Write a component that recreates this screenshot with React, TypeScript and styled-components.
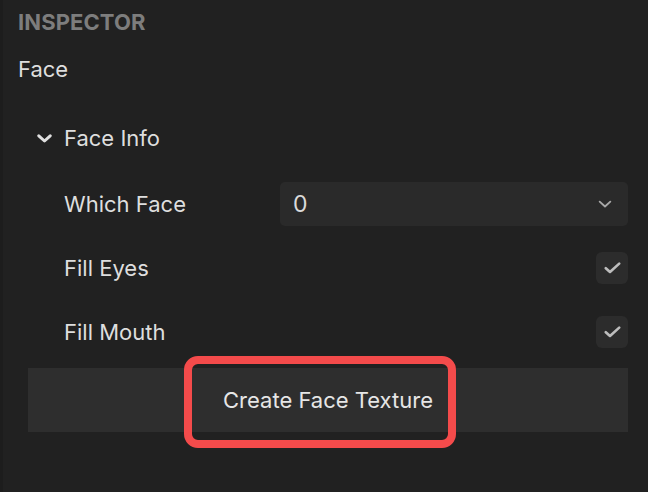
import React from "react";
import styled, { createGlobalStyle } from "styled-components";

const Global = createGlobalStyle`
  html, body { margin: 0; padding: 0; background: #212121; }
  body { font-family: Inter, "Noto Sans", "Liberation Sans", sans-serif; }
  * { box-sizing: border-box; }
`;

const Panel = styled.div`
  width: 648px;
  height: 492px;
  background: #212121;
  border-left: 3px solid #1d1d1d;
  color: #dedede;
  display: flex;
  flex-direction: column;
  padding-right: 20px;
  overflow: hidden;
`;

const Heading = styled.div`
  height: 44px;
  display: flex;
  align-items: center;
  padding-left: 15px;
  font-size: 22px;
  font-weight: 700;
  color: #7d7d7d;
  letter-spacing: 0.1px;
`;

const Title = styled.div`
  height: 50px;
  display: flex;
  align-items: center;
  padding-left: 15px;
  font-size: 22px;
`;

const SectionHeader = styled.div`
  margin-top: 12px;
  height: 64px;
  display: flex;
  align-items: center;
  padding-left: 34px;
  gap: 12px;
  font-size: 22px;
`;

const Row = styled.div<{ $first?: boolean }>`
  margin-top: ${(p) => (p.$first ? "2px" : "0")};
  height: 64px;
  display: flex;
  align-items: center;
  padding-left: 61px;
  font-size: 22px;
`;

const Label = styled.div`
  flex: 1;
`;

const Select = styled.div`
  width: 348px;
  height: 44px;
  background: #2a2a2a;
  border-radius: 5px;
  display: flex;
  align-items: center;
  justify-content: space-between;
  padding: 0 16px 0 13px;
  font-size: 23px;
  color: #dadada;
`;

const Check = styled.div`
  width: 32px;
  height: 32px;
  border-radius: 6px;
  background: #2c2c2c;
  display: flex;
  align-items: center;
  justify-content: center;
`;

const ButtonBar = styled.div`
  position: relative;
  margin: 4px 0 0 25px;
  height: 64px;
  background: #2e2e2e;
  display: flex;
  align-items: center;
  justify-content: center;
  font-size: 22px;
  color: #e6e6e6;
`;

const Highlight = styled.div`
  position: absolute;
  left: 156px;
  top: -12px;
  width: 272px;
  height: 92px;
  border: 8px solid #f44b4b;
  border-radius: 14px;
  pointer-events: none;
`;

const ChevronDown = ({ size, color, stroke }: { size: number; color: string; stroke: number }) => (
  <svg width={size} height={size * 0.6} viewBox="0 0 15 9" fill="none">
    <path d="M1.8 1.8 L7.5 7 L13.2 1.8" stroke={color} strokeWidth={stroke} strokeLinecap="round" strokeLinejoin="round" />
  </svg>
);

const CheckMark = () => (
  <svg width="17" height="12" viewBox="0 0 17 12" fill="none">
    <path d="M1.8 6.2 L6 10 L15.2 1.6" stroke="#bdbdbd" strokeWidth="2.6" strokeLinecap="round" strokeLinejoin="round" />
  </svg>
);

export default function App() {
  return (
    <>
      <Global />
      <Panel>
        <Heading>INSPECTOR</Heading>
        <Title>Face</Title>
        <SectionHeader>
          <ChevronDown size={15} color="#e0e0e0" stroke={3} />
          <span>Face Info</span>
        </SectionHeader>
        <Row $first>
          <Label>Which Face</Label>
          <Select>
            <span>0</span>
            <ChevronDown size={14} color="#a8a8a8" stroke={2} />
          </Select>
        </Row>
        <Row>
          <Label>Fill Eyes</Label>
          <Check>
            <CheckMark />
          </Check>
        </Row>
        <Row>
          <Label>Fill Mouth</Label>
          <Check>
            <CheckMark />
          </Check>
        </Row>
        <ButtonBar>
          Create Face Texture
          <Highlight />
        </ButtonBar>
      </Panel>
    </>
  );
}
